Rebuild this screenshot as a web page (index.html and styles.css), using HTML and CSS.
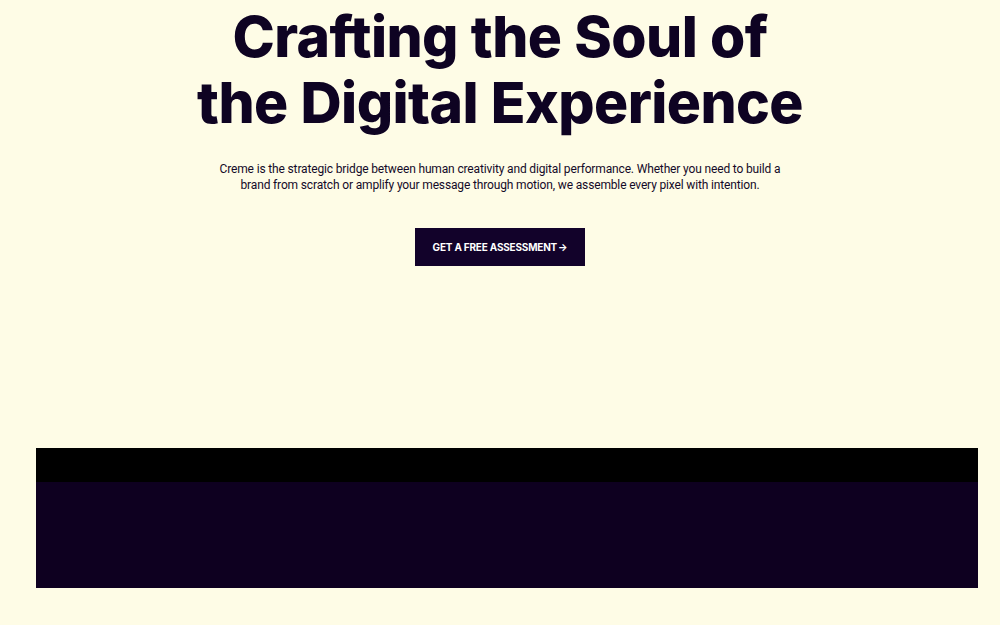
FILE: index.html
```html
<!DOCTYPE html>
<html lang="en">
<head>
<meta charset="utf-8">
<title>Creme</title>
<link rel="stylesheet" href="styles.css">
</head>
<body>
<main class="page">
  <section class="hero">
    <h1 class="hero-title">Crafting the Soul of<br>the Digital Experience</h1>
    <p class="hero-text">Creme is the strategic bridge between human creativity and digital performance. Whether you need to build a<br>brand from scratch or amplify your message through motion, we assemble every pixel with intention.</p>
    <a class="hero-btn" href="#">GET A FREE ASSESSMENT<span class="arrow">→</span></a>
  </section>
  <section class="showcase">
    <div class="showcase-top"></div>
    <div class="showcase-body"></div>
  </section>
</main>
</body>
</html>
```
FILE: styles.css
```css
html, body {
  margin: 0;
  padding: 0;
  background: #fefce6;
}
body {
  font-family: Inter, "Liberation Sans", sans-serif;
  color: #0e0322;
  height: 625px;
  overflow: hidden;
}
.page {
  display: flex;
  flex-direction: column;
}
.hero {
  display: flex;
  flex-direction: column;
  align-items: center;
  text-align: center;
}
.hero-title {
  margin: 4px 0 0;
  font-size: 57px;
  line-height: 66px;
  font-weight: 800;
  letter-spacing: -0.6px;
  word-spacing: 1px;
  color: #0e0322;
}
.hero-text {
  margin: 25px 0 0;
  width: 600px;
  font-family: Roboto, "Liberation Sans", sans-serif;
  font-size: 12px;
  line-height: 16px;
  font-weight: 400;
  letter-spacing: -0.15px;
  white-space: nowrap;
  color: #140a28;
}
.hero-btn {
  margin-top: 35px;
  display: flex;
  align-items: center;
  justify-content: center;
  width: 170px;
  height: 38px;
  background: #12022a;
  color: #ffffff;
  font-size: 10px;
  font-weight: 700;
  text-decoration: none;
  letter-spacing: -0.2px;
}
.arrow {
  margin-left: 1px;
}
.showcase {
  margin: 182px 0 0 36px;
  width: 942px;
  display: flex;
  flex-direction: column;
}
.showcase-top {
  height: 34px;
  background: #000000;
}
.showcase-body {
  height: 106px;
  background: #0e0020;
}
```
